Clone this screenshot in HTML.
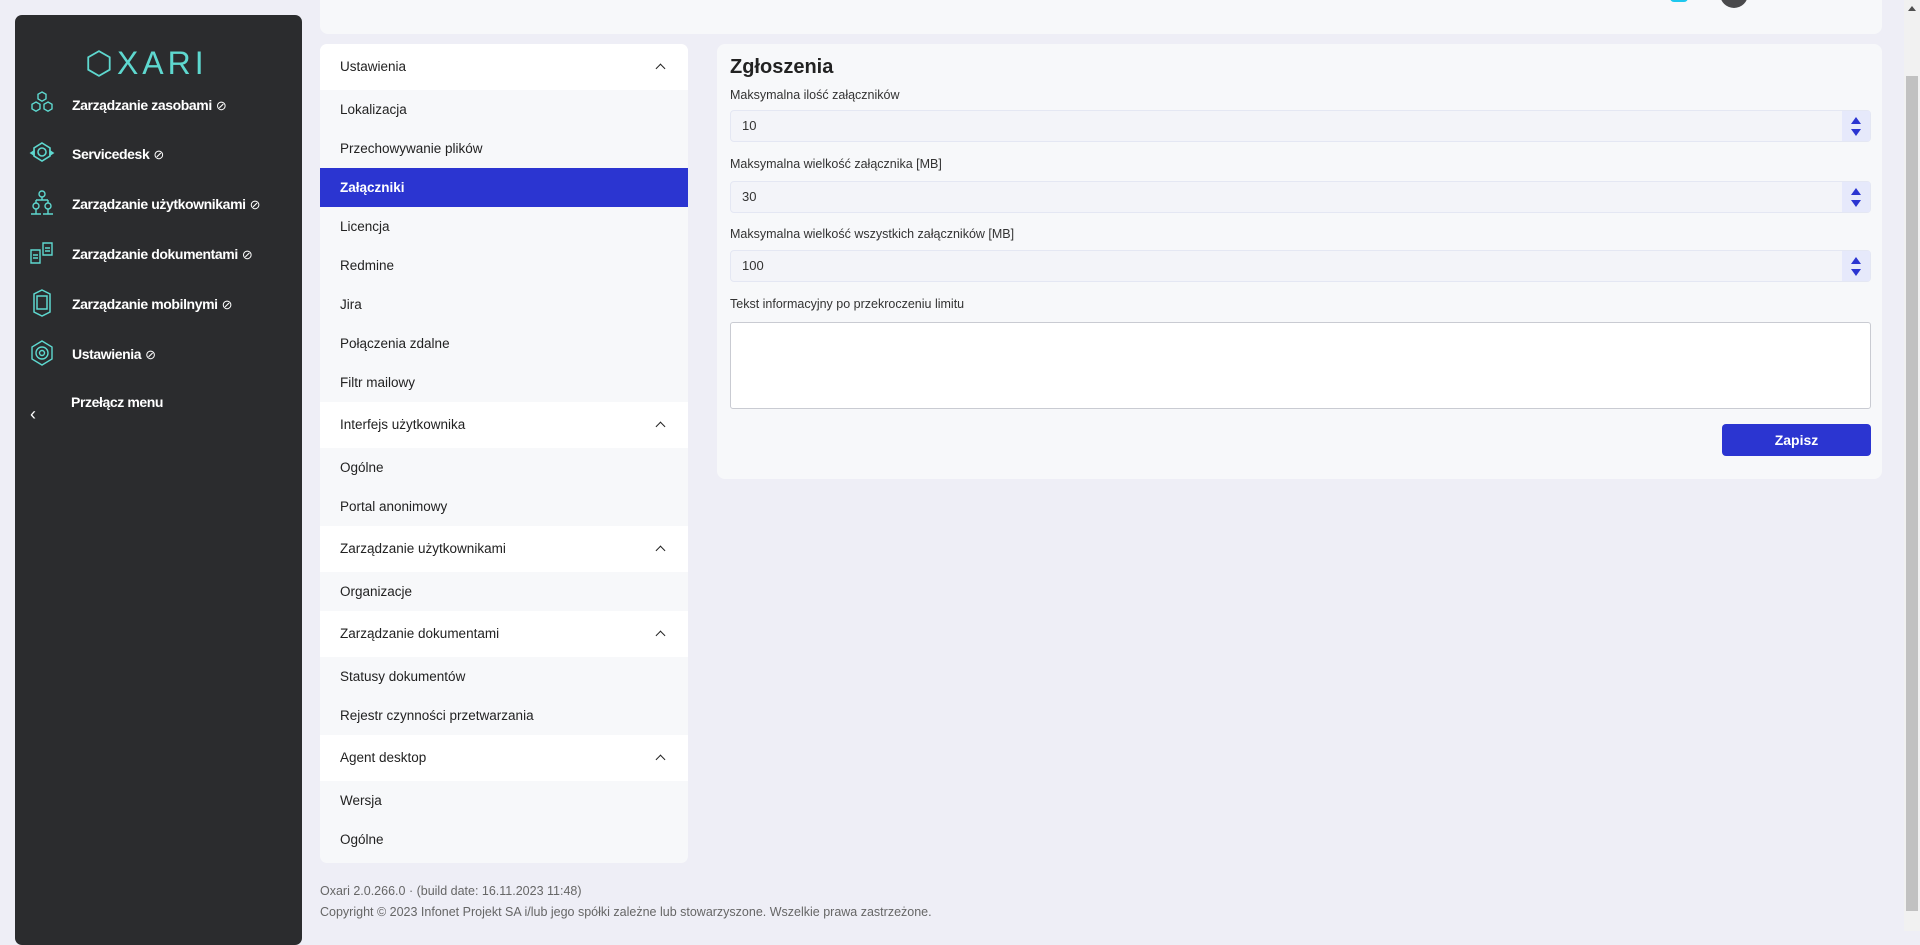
<!DOCTYPE html>
<html><head><meta charset="utf-8"><style>
*{box-sizing:border-box;margin:0;padding:0}
body{width:1920px;height:931px;overflow:hidden;background:#eeeef6;font-family:"Liberation Sans",sans-serif;position:relative}
.sb{position:absolute;left:15px;top:15px;width:287px;height:930px;background:#2b2c2e;border-radius:7px}
.logo{position:absolute;left:70px;top:29px;font-size:32px;letter-spacing:4px;color:#5ed8cf;font-weight:300}
.mi{position:absolute;left:0;width:287px;height:30px}
.mi svg{position:absolute;left:12px;top:0}
.mi span{position:absolute;left:57px;top:8px;color:#fff;font-weight:bold;font-size:14px;letter-spacing:-0.4px}
.mi i{font-style:normal;font-weight:normal;font-size:13px;margin-left:4px}
.top{position:absolute;left:320px;top:-8px;width:1562px;height:42px;background:#f7f8fa;border-radius:8px}
.lp{position:absolute;left:320px;top:44px;width:368px;height:819px;background:#f7f8fa;border-radius:7px;overflow:hidden}
.h{height:46px;background:#fff;position:relative;font-size:13.5px;color:#222;padding-left:20px;line-height:46px}
.h:after{content:"";position:absolute;right:24px;top:21px;width:6px;height:6px;border-left:1.6px solid #222;border-top:1.6px solid #222;transform:rotate(45deg)}
.it{height:39px;line-height:39px;padding-left:20px;font-size:13.5px;color:#222}
.it.a{background:#2b35d1;color:#fff;font-weight:bold}
.rp{position:absolute;left:717px;top:44px;width:1165px;height:435px;background:#f7f8fa;border-radius:8px}
.t{position:absolute;left:13px;top:12px;font-size:20px;font-weight:bold;color:#222}
.lb{position:absolute;left:13px;font-size:12.5px;color:#333}
.in{position:absolute;left:13px;width:1141px;height:32px;background:#f3f4f9;border:1px solid #e4e7f3;border-radius:4px;font-size:13px;color:#333;padding-left:11px;line-height:30px}
.sp{position:absolute;right:0;top:0;width:28px;height:30px;background:#e6e9fb}
.sp:before{content:"";position:absolute;left:9px;top:6px;border:5px solid transparent;border-bottom:7px solid #2b35d1;border-top:0}
.sp:after{content:"";position:absolute;left:9px;top:18px;border:5px solid transparent;border-top:7px solid #2b35d1;border-bottom:0}
.ta{position:absolute;left:13px;top:278px;width:1141px;height:87px;background:#fff;border:1px solid #c9cbd2;border-radius:3px}
.btn{position:absolute;left:1005px;top:380px;width:149px;height:32px;background:#2b35d1;border-radius:4px;color:#fff;font-weight:bold;font-size:14px;text-align:center;line-height:32px}
.ft{position:absolute;left:320px;font-size:12.5px;color:#666}
.scr{position:absolute;left:1904px;top:0;width:16px;height:931px;background:#f1f1f1}
.th{position:absolute;left:1906px;top:76px;width:12px;height:835px;background:#c1c1c1}
</style></head><body>
<div class="top"></div>
<div style="position:absolute;left:1670px;top:-6px;width:18px;height:8px;background:#1ec8ee;border-radius:4px"></div>
<div style="position:absolute;left:1720px;top:-20px;width:28px;height:28px;background:#4a4a4c;border-radius:50%"></div>

<div class="sb">
<div class="logo">⬡XARI</div>
<div class="mi" style="top:74px"><svg width="30" height="30" viewBox="0 0 30 30" fill="none" stroke="#5ed8cf" stroke-width="1.4"><path d="M15 3l4 2.3v4.6L15 12.2 11 9.9V5.3z M9 13l4 2.3v4.6L9 22.2 5 19.9v-4.6z M21 13l4 2.3v4.6L21 22.2 17 19.9v-4.6z"/></svg><span>Zarządzanie zasobami<i>⊘</i></span></div>
<div class="mi" style="top:123px"><svg width="30" height="30" viewBox="0 0 30 30" fill="none" stroke="#5ed8cf" stroke-width="1.6"><path d="M15 5l8 5v8l-8 5-8-5v-8z"/><circle cx="15" cy="14" r="4"/><path d="M4 15l3-2v4z M26 15l-3-2v4z" fill="#5ed8cf"/></svg><span>Servicedesk<i>⊘</i></span></div>
<div class="mi" style="top:173px"><svg width="30" height="30" viewBox="0 0 30 30" fill="none" stroke="#5ed8cf" stroke-width="1.4"><circle cx="15" cy="6" r="3"/><circle cx="9" cy="18" r="3"/><circle cx="21" cy="18" r="3"/><path d="M15 9v3M9 12h12M9 12v3M21 12v3M4 26h10M16 26h10M9 21v5M21 21v5"/></svg><span>Zarządzanie użytkownikami<i>⊘</i></span></div>
<div class="mi" style="top:223px"><svg width="30" height="30" viewBox="0 0 30 30" fill="none" stroke="#5ed8cf" stroke-width="1.4"><path d="M4 12h9v13H4z M16 5h9v12h-9z M6 17h5M6 20h5M18 10h5M18 13h5"/></svg><span>Zarządzanie dokumentami<i>⊘</i></span></div>
<div class="mi" style="top:273px"><svg width="30" height="30" viewBox="0 0 30 30" fill="none" stroke="#5ed8cf" stroke-width="1.5"><path d="M15 2l8 4v18l-8 4-8-4V6z"/><rect x="10" y="8" width="10" height="13"/></svg><span>Zarządzanie mobilnymi<i>⊘</i></span></div>
<div class="mi" style="top:323px"><svg width="30" height="30" viewBox="0 0 30 30" fill="none" stroke="#5ed8cf" stroke-width="1.4"><path d="M15 3l10 6v12l-10 6-10-6V9z"/><circle cx="15" cy="15" r="6"/><circle cx="15" cy="15" r="2.5"/></svg><span>Ustawienia<i>⊘</i></span></div>
<div class="mi" style="top:379px"><span style="left:15px;top:10px;font-size:18px;font-weight:normal">‹</span><span style="left:56px;top:0">Przełącz menu</span></div>
</div>

<div class="lp">
<div class="h">Ustawienia</div>
<div class="it">Lokalizacja</div><div class="it">Przechowywanie plików</div><div class="it a">Załączniki</div><div class="it">Licencja</div><div class="it">Redmine</div><div class="it">Jira</div><div class="it">Połączenia zdalne</div><div class="it">Filtr mailowy</div>
<div class="h">Interfejs użytkownika</div>
<div class="it">Ogólne</div><div class="it">Portal anonimowy</div>
<div class="h">Zarządzanie użytkownikami</div>
<div class="it">Organizacje</div>
<div class="h">Zarządzanie dokumentami</div>
<div class="it">Statusy dokumentów</div><div class="it">Rejestr czynności przetwarzania</div>
<div class="h">Agent desktop</div>
<div class="it">Wersja</div><div class="it">Ogólne</div>
</div>

<div class="rp">
<div class="t">Zgłoszenia</div>
<div class="lb" style="top:44px">Maksymalna ilość załączników</div>
<div class="in" style="top:66px">10<div class="sp"></div></div>
<div class="lb" style="top:113px">Maksymalna wielkość załącznika [MB]</div>
<div class="in" style="top:137px">30<div class="sp"></div></div>
<div class="lb" style="top:183px">Maksymalna wielkość wszystkich załączników [MB]</div>
<div class="in" style="top:206px">100<div class="sp"></div></div>
<div class="lb" style="top:253px">Tekst informacyjny po przekroczeniu limitu</div>
<div class="ta"></div>
<div class="btn">Zapisz</div>
</div>

<div class="ft" style="top:884px">Oxari 2.0.266.0 · (build date: 16.11.2023 11:48)</div>
<div class="ft" style="top:905px">Copyright © 2023 Infonet Projekt SA i/lub jego spółki zależne lub stowarzyszone. Wszelkie prawa zastrzeżone.</div>
<div class="scr"></div><div class="th"></div>
<div style="position:absolute;left:1908px;top:6px;border:4px solid transparent;border-bottom:5px solid #505050;border-top:0"></div>
</body></html>
